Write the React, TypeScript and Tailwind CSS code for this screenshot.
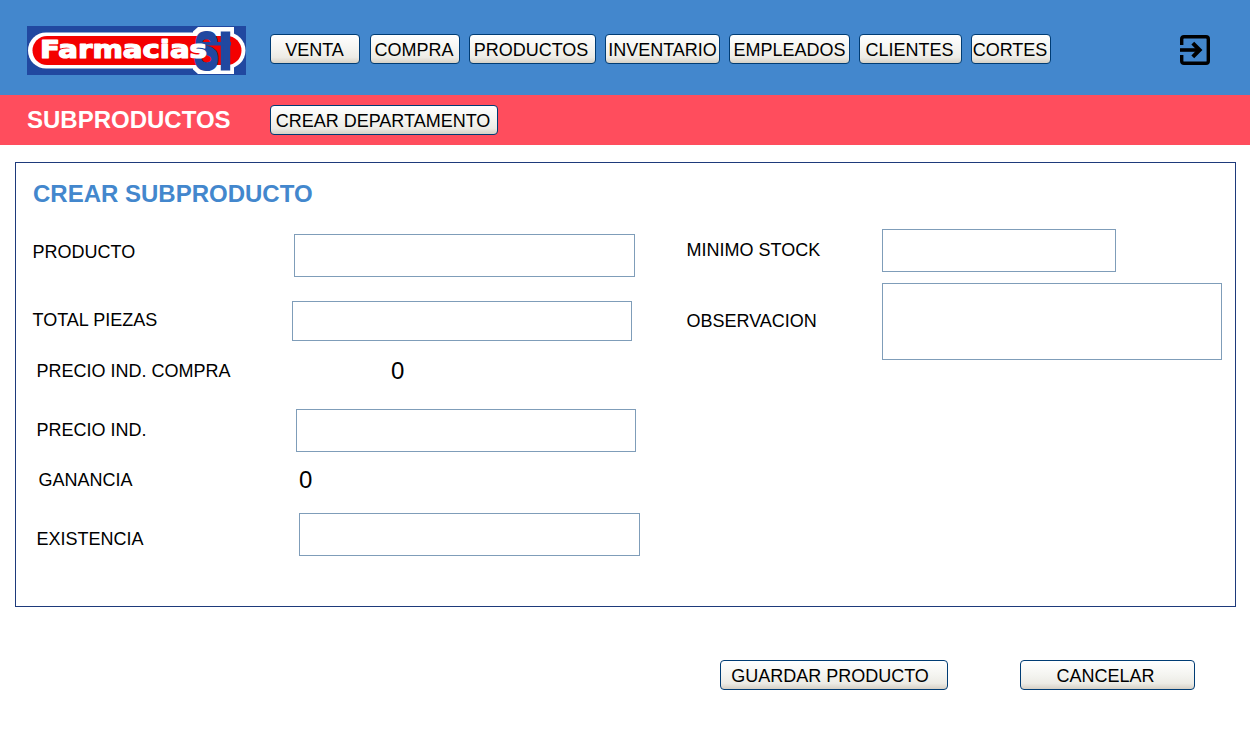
import type { ReactNode } from "react";

const nav: [string, string][] = [
  ["VENTA", "w-[90px] pr-px"],
  ["COMPRA", "w-[90px] ml-[10px] pr-[2px]"],
  ["PRODUCTOS", "w-[127px] ml-[9px] pr-[3px]"],
  ["INVENTARIO", "w-[115px] ml-[9px]"],
  ["EMPLEADOS", "w-[121px] ml-[9px]"],
  ["CLIENTES", "w-[103px] ml-[9px] pr-[2px]"],
  ["CORTES", "w-[80px] ml-[9px] pr-[2px]"],
];

function Button({ children, className }: { children: ReactNode; className: string }) {
  return (
    <button
      className={`flex h-[30px] shrink-0 items-center justify-center whitespace-nowrap rounded-[4px] border border-[#003c74] bg-[linear-gradient(#ffffff_0%,#f4f4f0_50%,#ecebe5_80%,#d6d0c5_100%)] pt-px text-[18px] leading-[20px] text-black ${className}`}
    >
      {children}
    </button>
  );
}

function Logo() {
  return (
    <svg className="block h-[49px] w-[219px] shrink-0 overflow-visible" viewBox="0 0 219 49" role="img" aria-label="Farmacias Si">
      <rect width="219" height="49" fill="#2148a0" />
      <rect x="1" y="6.5" width="217.5" height="36" rx="18" fill="#fff" />
      <rect x="5.5" y="10" width="209" height="29" rx="14.5" fill="#f40000" />
      <path d="M171 1H207V10H166V5.500ZM166 39H207V48H171L166 43.500Z" fill="#fff" />
      <g fill="#2148a0" stroke="#2148a0" fontFamily="Liberation Sans" fontWeight="700" fontSize="52">
        <text x="167.500" y="43" textLength="24" lengthAdjust="spacingAndGlyphs" strokeWidth="3">S</text>
        <text x="192" y="43" textLength="13" lengthAdjust="spacingAndGlyphs" strokeWidth="3">I</text>
      </g>
      <rect x="169" y="16" width="35" height="3.500" fill="#2148a0" />
      <text x="13" y="32.300" textLength="167" lengthAdjust="spacingAndGlyphs" fill="#fff" stroke="#fff" strokeWidth="1.200" strokeLinejoin="round" fontFamily="DejaVu Sans" fontWeight="700" fontSize="24.500">
        Farmacias
      </text>
    </svg>
  );
}

function Field({ label, row, labelClass, inputClass, value }: { label: string; row: string; labelClass: string; inputClass?: string; value?: string }) {
  return (
    <label className={`flex items-start ${row}`}>
      <span className={`shrink-0 text-[18px] leading-[20px] ${labelClass}`}>{label}</span>
      {value !== undefined ? (
        <output className="text-[24px] leading-[28px]">{value}</output>
      ) : (
        <input className={`shrink-0 border border-[#7f9db9] bg-white outline-none ${inputClass}`} />
      )}
    </label>
  );
}

export default function App() {
  return (
    <div className="h-[750px] w-[1250px] overflow-hidden bg-white font-['Liberation_Sans',Arial,sans-serif] text-black">
      <header className="flex h-[95px] items-start bg-[#4387cd] pl-[27px] pt-[26px]">
        <Logo />
        <nav className="ml-6 mt-2 flex">
          {nav.map(([name, cls]) => (
            <Button key={name} className={cls}>{name}</Button>
          ))}
        </nav>
        <svg className="ml-[129px] mt-[9px] h-[30px] w-[30px]" viewBox="0 0 30 30" fill="none" stroke="#000" strokeWidth="3.400" aria-label="Salir">
          <path d="M1.700 10V4Q1.700 1.700 4 1.700H26Q28.300 1.700 28.300 4V26Q28.300 28.300 26 28.300H4Q1.700 28.300 1.700 26V20" strokeLinejoin="round" />
          <path d="M0 15H19" strokeWidth="3.600" />
          <path d="M12.800 8.200 19.600 15 12.800 21.800" strokeWidth="4" />
        </svg>
      </header>

      <div className="flex h-[50px] items-center bg-[#ff4d5d] pl-[27px]">
        <h1 className="w-[243px] text-[24px] font-bold leading-[28px] text-white">SUBPRODUCTOS</h1>
        <Button className="w-[228px] pr-[2px]">CREAR DEPARTAMENTO</Button>
      </div>

      <main className="mx-[15px] mt-[17px] h-[445px] w-[1221px] border border-[#1e3a7b]">
        <h2 className="pl-[17px] pt-[17px] text-[24px] font-bold leading-[28px] text-[#4387cd]">CREAR SUBPRODUCTO</h2>
        <div className="flex">
          <div className="w-[653px] shrink-0 pt-[26px]">
            <Field label="PRODUCTO" row="h-[43px]" labelClass="w-[278px] pl-[16.5px] pt-2" inputClass="h-[43px] w-[341px]" />
            <Field label="TOTAL PIEZAS" row="mt-6 h-[40px]" labelClass="w-[276px] pl-[16.5px] pt-[9px]" inputClass="h-[40px] w-[340px]" />
            <Field label="PRECIO IND. COMPRA" row="mt-[16px] h-[28px]" labelClass="w-[375px] pl-[20.5px] pt-[4px]" value="0" />
            <Field label="PRECIO IND." row="mt-[24px] h-[43px]" labelClass="w-[280px] pl-[20.5px] pt-[11px]" inputClass="h-[43px] w-[340px]" />
            <Field label="GANANCIA" row="mt-[14px] h-[28px]" labelClass="w-[283px] pl-[22.5px] pt-[4px]" value="0" />
            <Field label="EXISTENCIA" row="mt-[19px] h-[43px]" labelClass="w-[283px] pl-[20.5px] pt-[16px]" inputClass="h-[43px] w-[341px]" />
          </div>
          <div className="pt-[21px]">
            <Field label="MINIMO STOCK" row="h-[43px]" labelClass="w-[213px] pl-[17.5px] pt-[11px]" inputClass="h-[43px] w-[234px]" />
            <Field label="OBSERVACION" row="mt-[11px] h-[77px]" labelClass="w-[213px] pl-[17.5px] pt-[28px]" inputClass="h-[77px] w-[340px]" />
          </div>
        </div>
      </main>

      <footer className="mt-[53px] flex pl-[720px]">
        <Button className="w-[228px] pr-[8px]">GUARDAR PRODUCTO</Button>
        <Button className="ml-[72px] w-[175px] pr-1">CANCELAR</Button>
      </footer>
    </div>
  );
}
